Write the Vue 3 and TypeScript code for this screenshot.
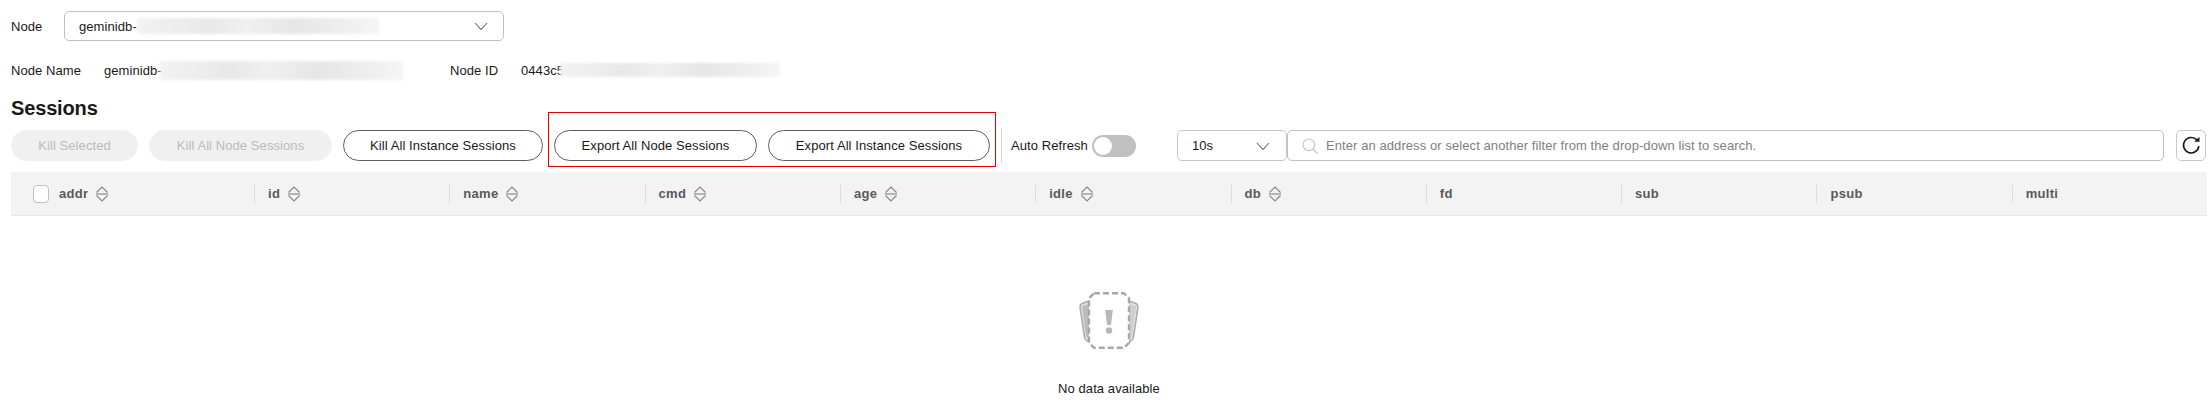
<script setup lang="ts">
interface Column {
  name: string;
  sortable: boolean;
}

const columns: Column[] = [
  { name: "addr", sortable: true },
  { name: "id", sortable: true },
  { name: "name", sortable: true },
  { name: "cmd", sortable: true },
  { name: "age", sortable: true },
  { name: "idle", sortable: true },
  { name: "db", sortable: true },
  { name: "fd", sortable: false },
  { name: "sub", sortable: false },
  { name: "psub", sortable: false },
  { name: "multi", sortable: false },
];
</script>

<template>
  <div class="page">
    <div class="node-row">
      <span class="label">Node</span>
      <div class="node-select">
        <span>geminidb-</span>
        <span class="redact redact-select"></span>
        <svg class="chevron" width="16" height="16" viewBox="0 0 16 16">
          <path d="M2 5l6 6.5 6-6.5" fill="none" stroke="#666" stroke-width="1.1" />
        </svg>
      </div>
    </div>

    <div class="info-row">
      <span class="info-label">Node Name</span>
      <span class="name-value">geminidb-</span>
      <span class="redact redact-name"></span>
      <span class="info-label id-label">Node ID</span>
      <span class="id-value">0443c5</span>
      <span class="redact redact-id"></span>
    </div>

    <h2 class="title">Sessions</h2>

    <div class="toolbar">
      <button class="btn disabled kill-selected">Kill Selected</button>
      <button class="btn disabled kill-node">Kill All Node Sessions</button>
      <button class="btn kill-instance">Kill All Instance Sessions</button>
      <div class="export-group">
        <button class="btn export-node">Export All Node Sessions</button>
        <button class="btn export-instance">Export All Instance Sessions</button>
        <div class="highlight"></div>
      </div>
      <div class="divider"></div>
      <span class="auto-label">Auto Refresh</span>
      <div class="switch"><span class="knob"></span></div>
      <div class="interval">
        <span>10s</span>
        <svg class="chevron" width="14" height="14" viewBox="0 0 14 14">
          <path d="M1 4l6 6.5L13 4" fill="none" stroke="#666" stroke-width="1.1" />
        </svg>
      </div>
      <div class="search">
        <svg width="16" height="16" viewBox="0 0 16 16">
          <circle cx="6.8" cy="6.8" r="5.8" fill="none" stroke="#c4c4c4" stroke-width="1.2" />
          <path d="M11 11l4.5 4.5" stroke="#c4c4c4" stroke-width="1.2" />
        </svg>
        <span>Enter an address or select another filter from the drop-down list to search.</span>
      </div>
      <button class="refresh">
        <svg width="21" height="21" viewBox="0 0 18 18">
          <path d="M15.3 9.5a6.6 6.6 0 1 1-1.6-5.1" fill="none" stroke="#191919" stroke-width="1.4" />
          <path d="M15.8 1.4v4.4h-4.4z" fill="#191919" />
        </svg>
      </button>
    </div>

    <div class="table-head">
      <div v-for="(col, i) in columns" :key="col.name" class="cell" :class="{ first: i === 0 }">
        <span v-if="i === 0" class="checkbox"></span>
        <span>{{ col.name }}</span>
        <svg v-if="col.sortable" class="sort" width="14" height="16" viewBox="0 0 14 16">
          <path d="M1.500 6.500L7 1l5.500 5.500M1.500 9.500L7 15l5.500-5.500" fill="none" stroke="#858585" stroke-width="1.100" />
          <path d="M1 8h12" stroke="#b4b4b4" stroke-width="2" />
        </svg>
      </div>
    </div>

    <div class="empty">
      <svg width="60" height="57" viewBox="0 0 60 57">
        <path d="M10 9L3 11.5Q1 12.3 1 15l4.5 30q.6 3.500 5 5z" fill="#e2e2e2" stroke="#ababab" stroke-width="1.6" />
        <path d="M50 9l7 2.500q2 .8 2 3.500l-4.500 30q-.6 3.500-5 5z" fill="#e2e2e2" stroke="#ababab" stroke-width="1.6" />
        <path d="M3 14l4 30 3 3V12z" fill="#bcbcbc" />
        <path d="M57 14l-4 30-3 3V12z" fill="#cfcfcf" />
        <path
          d="M15 1.200H45L50 6.200V50.800L45 55.800H15L10 50.800V6.200z"
          fill="#fff"
          stroke="#a8a8a8"
          stroke-width="2.400"
          stroke-dasharray="6 3"
        />
        <path d="M26.200 18h7.600l-1.800 15h-4z" fill="#b8b8b8" />
        <circle cx="30" cy="38.500" r="3.200" fill="#b8b8b8" />
      </svg>
      <p>No data available</p>
    </div>
  </div>
</template>

<style>
body {
  background: #fff;
}
</style>

<style scoped>
.page {
  width: 2209px;
  height: 412px;
  overflow: hidden;
  padding: 11px 2px 0 11px;
  box-sizing: border-box;
  font-family: "Liberation Sans", Arial, sans-serif;
  font-size: 13px;
  letter-spacing: 0.08px;
  color: #191919;
}

.node-row {
  display: flex;
  align-items: center;
  height: 30px;
}

.label {
  width: 53px;
}

.node-select {
  display: flex;
  align-items: center;
  width: 440px;
  height: 30px;
  box-sizing: border-box;
  padding: 0 14px;
  border: 1px solid #c0c0c0;
  border-radius: 5px;
}

.chevron {
  margin-left: auto;
}

.redact {
  display: block;
  filter: blur(1.5px);
  background: linear-gradient(90deg, #f2f2f2, #e8e8e8 30%, #f0f0f0 45%, #e6e6e6 65%, #eee 85%, #f5f5f5);
}

.redact-select {
  width: 242px;
  height: 16px;
}

.redact-name {
  width: 243px;
  height: 19px;
}

.redact-id {
  width: 220px;
  height: 14px;
}

.info-row {
  display: flex;
  align-items: center;
  height: 20px;
  margin-top: 19px;
}

.info-label {
  width: 93px;
}

.name-value {
  width: 56px;
}

.id-label {
  width: 71px;
  margin-left: 47px;
}

.id-value {
  width: 39px;
}

.title {
  margin: 17px 0 0;
  height: 23px;
  line-height: 23px;
  font-size: 20px;
  font-weight: 700;
  letter-spacing: -0.15px;
}

.toolbar {
  display: flex;
  align-items: center;
  height: 31px;
  margin-top: 10px;
}

.btn {
  height: 31px;
  padding: 0;
  box-sizing: border-box;
  border: 1px solid #5e5e5e;
  border-radius: 16px;
  background: #fff;
  color: #191919;
  font: inherit;
  letter-spacing: inherit;
  white-space: nowrap;
}

.btn.disabled {
  border-color: #f0f0f0;
  background: #f0f0f0;
  color: #bbb;
}

.kill-selected {
  width: 127px;
  margin-right: 11px;
}

.kill-node {
  width: 183px;
  margin-right: 11px;
}

.kill-instance {
  width: 200px;
}

.export-group {
  position: relative;
  display: flex;
  gap: 11px;
  margin-left: 11px;
}

.export-node {
  width: 203px;
}

.export-instance {
  width: 222px;
}

.highlight {
  position: absolute;
  left: -6px;
  right: -6px;
  top: -18px;
  bottom: -6px;
  border: 1px solid #e00000;
  pointer-events: none;
}

.divider {
  flex-shrink: 0;
  width: 1px;
  height: 35px;
  margin-left: 11px;
  background: #d8d8d8;
}

.auto-label {
  width: 81px;
  flex-shrink: 0;
  margin-left: 9px;
  white-space: nowrap;
}

.switch {
  display: flex;
  flex-shrink: 0;
  align-items: center;
  width: 44px;
  height: 22px;
  border-radius: 11px;
  background: #c0c0c0;
}

.knob {
  width: 18px;
  height: 18px;
  margin-left: 2px;
  border-radius: 50%;
  background: #fff;
}

.interval {
  display: flex;
  flex-shrink: 0;
  align-items: center;
  width: 110px;
  height: 31px;
  box-sizing: border-box;
  margin-left: 41px;
  padding: 0 16px 0 14px;
  border: 1px solid #c8c8c8;
  border-radius: 5px;
}

.search {
  display: flex;
  flex-shrink: 0;
  align-items: center;
  gap: 8px;
  width: 877px;
  height: 31px;
  box-sizing: border-box;
  padding-left: 14px;
  border: 1px solid #c0c0c0;
  border-radius: 5px;
  color: #808080;
}

.refresh {
  display: flex;
  flex-shrink: 0;
  align-items: center;
  justify-content: center;
  width: 30px;
  height: 31px;
  padding: 0;
  margin-left: 12px;
  border: 1px solid #c8c8c8;
  border-radius: 5px;
  background: #fff;
}

.table-head {
  display: grid;
  grid-template-columns: 243px repeat(10, 1fr);
  align-items: center;
  height: 44px;
  margin-top: 11px;
  background: #f3f3f3;
  border-bottom: 1px solid #e8e8e8;
  box-sizing: border-box;
  color: #595959;
  font-weight: 700;
  letter-spacing: 0.3px;
}

.cell {
  display: flex;
  align-items: center;
  gap: 7px;
  height: 18px;
  padding-left: 13px;
  border-left: 1px solid #dcdcdc;
}

.cell.first {
  padding-left: 22px;
  border-left: none;
}

.checkbox {
  width: 16px;
  height: 18px;
  box-sizing: border-box;
  margin-right: 3px;
  border: 1px solid #c0c0c0;
  border-radius: 4px;
  background: #fff;
}

.empty {
  display: flex;
  flex-direction: column;
  align-items: center;
  margin-top: 76px;
}

.empty p {
  margin: 32px 0 0;
  line-height: 16px;
}
</style>
